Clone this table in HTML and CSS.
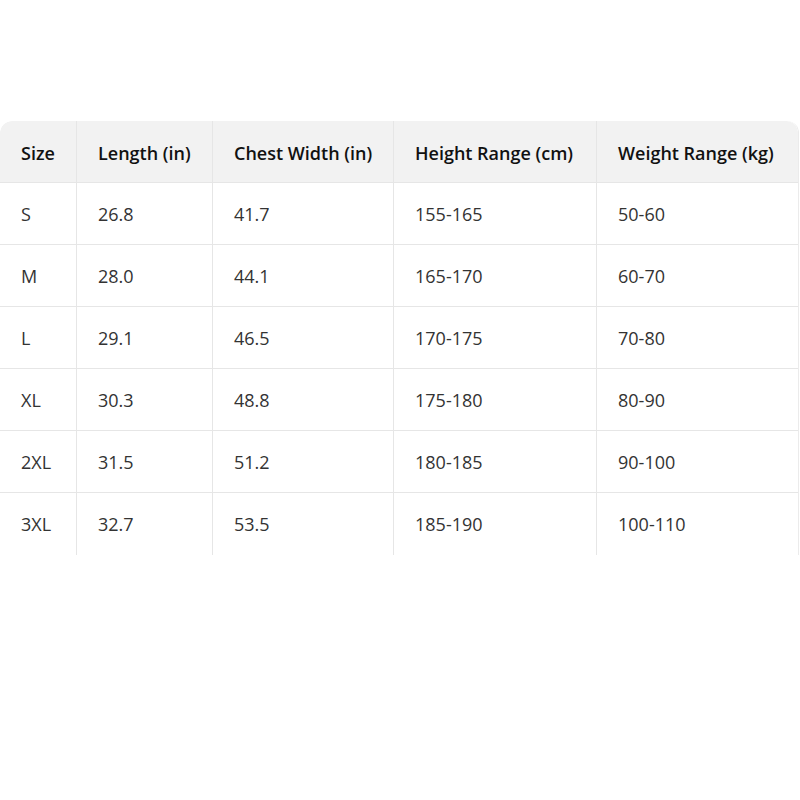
FILE: index.html
```html
<!DOCTYPE html>
<html>
<head>
<meta charset="utf-8">
<link rel="stylesheet" href="styles.css">
</head>
<body>
<div class="wrap">
  <table class="size-table">
    <thead>
      <tr><th class="c1">Size</th><th class="c2">Length (in)</th><th class="c3">Chest Width (in)</th><th class="c4">Height Range (cm)</th><th class="c5">Weight Range (kg)</th></tr>
    </thead>
    <tbody>
      <tr><td>S</td><td>26.8</td><td>41.7</td><td>155-165</td><td>50-60</td></tr>
      <tr><td>M</td><td>28.0</td><td>44.1</td><td>165-170</td><td>60-70</td></tr>
      <tr><td>L</td><td>29.1</td><td>46.5</td><td>170-175</td><td>70-80</td></tr>
      <tr><td>XL</td><td>30.3</td><td>48.8</td><td>175-180</td><td>80-90</td></tr>
      <tr><td>2XL</td><td>31.5</td><td>51.2</td><td>180-185</td><td>90-100</td></tr>
      <tr class="last"><td>3XL</td><td>32.7</td><td>53.5</td><td>185-190</td><td>100-110</td></tr>
    </tbody>
  </table>
</div>
</body>
</html>
```

FILE: styles.css
```css
html, body {
  margin: 0;
  padding: 0;
  background: #ffffff;
}
body {
  font-family: "Open Sans", "Noto Sans", "Liberation Sans", sans-serif;
}
.wrap {
  padding-top: 121px;
  width: 798px;
}
.size-table {
  width: 798px;
  border-collapse: separate;
  border-spacing: 0;
  table-layout: fixed;
  border-top-left-radius: 12px;
  border-top-right-radius: 12px;
  border-right: 1px solid #ebebeb;
  overflow: hidden;
}
.size-table th,
.size-table td {
  height: 62px;
  padding: 0 0 0 21px;
  text-align: left;
  vertical-align: middle;
  border-bottom: 1px solid #e6e6e6;
  border-left: 1px solid #e6e6e6;
  font-size: 18px;
  box-sizing: border-box;
}
.size-table th:first-child,
.size-table td:first-child {
  border-left: none;
}
.size-table th {
  background: #f2f2f2;
  color: #111111;
  font-weight: 600;
  height: 62px;
  padding-top: 2px;
}
.size-table td {
  color: #333333;
  font-weight: 400;
}
.size-table tr.last td {
  border-bottom: none;
  height: 62px;
}
.c1 { width: 76px; }
.c2 { width: 136px; }
.c3 { width: 181px; }
.c4 { width: 203px; }
.c5 { width: 202px; }
.size-table th.c1 { border-top-left-radius: 12px; }
.size-table th.c5 { border-top-right-radius: 12px; }
```
